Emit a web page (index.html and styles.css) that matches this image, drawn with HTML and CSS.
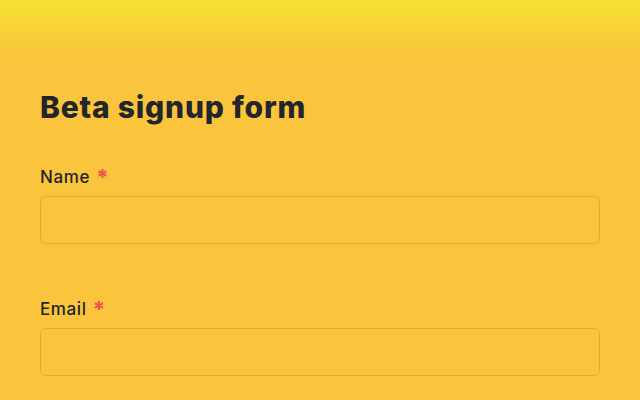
FILE: index.html
```html
<!DOCTYPE html>
<html>
<head>
<meta charset="utf-8">
<link rel="stylesheet" href="styles.css">
</head>
<body>
<div class="page">
  <h1 class="title">Beta signup form</h1>
  <form class="form">
    <div class="field">
      <label class="label">Name <span class="req">*</span></label>
      <input class="input" type="text">
    </div>
    <div class="field">
      <label class="label">Email <span class="req">*</span></label>
      <input class="input" type="email">
    </div>
  </form>
</div>
</body>
</html>
```
FILE: styles.css
```css
html, body {
  margin: 0;
  padding: 0;
}
body {
  background: #fac43c;
  font-family: Inter, "Liberation Sans", sans-serif;
  color: #22252b;
  height: 400px;
  overflow: hidden;
}
.page {
  background: linear-gradient(to bottom, #f6e132 0px, #fac43c 60px, #fac43c 100%);
  min-height: 400px;
  padding: 88px 40px 0 40px;
  box-sizing: border-box;
}
.title {
  margin: 0 0 39px 0;
  font-size: 30px;
  font-weight: 800;
  line-height: 38px;
  letter-spacing: 0.8px;
}
.form {
  display: flex;
  flex-direction: column;
  gap: 53px;
}
.field {
  display: flex;
  flex-direction: column;
  gap: 8px;
}
.label {
  display: block;
  height: 22px;
  margin-top: 1px;
  font-size: 17px;
  line-height: 22px;
  font-weight: 500;
  letter-spacing: 0.6px;
}
.req {
  color: #f0504d;
  font-size: 22px;
  font-weight: 700;
  margin-left: 1px;
  position: relative;
  top: 2px;
  line-height: 0;
}
.input {
  height: 48px;
  box-sizing: border-box;
  border: 1px solid #e0ad34;
  border-radius: 6px;
  background: transparent;
  width: 560px;
  font-size: 16px;
  margin: 0;
}
```
